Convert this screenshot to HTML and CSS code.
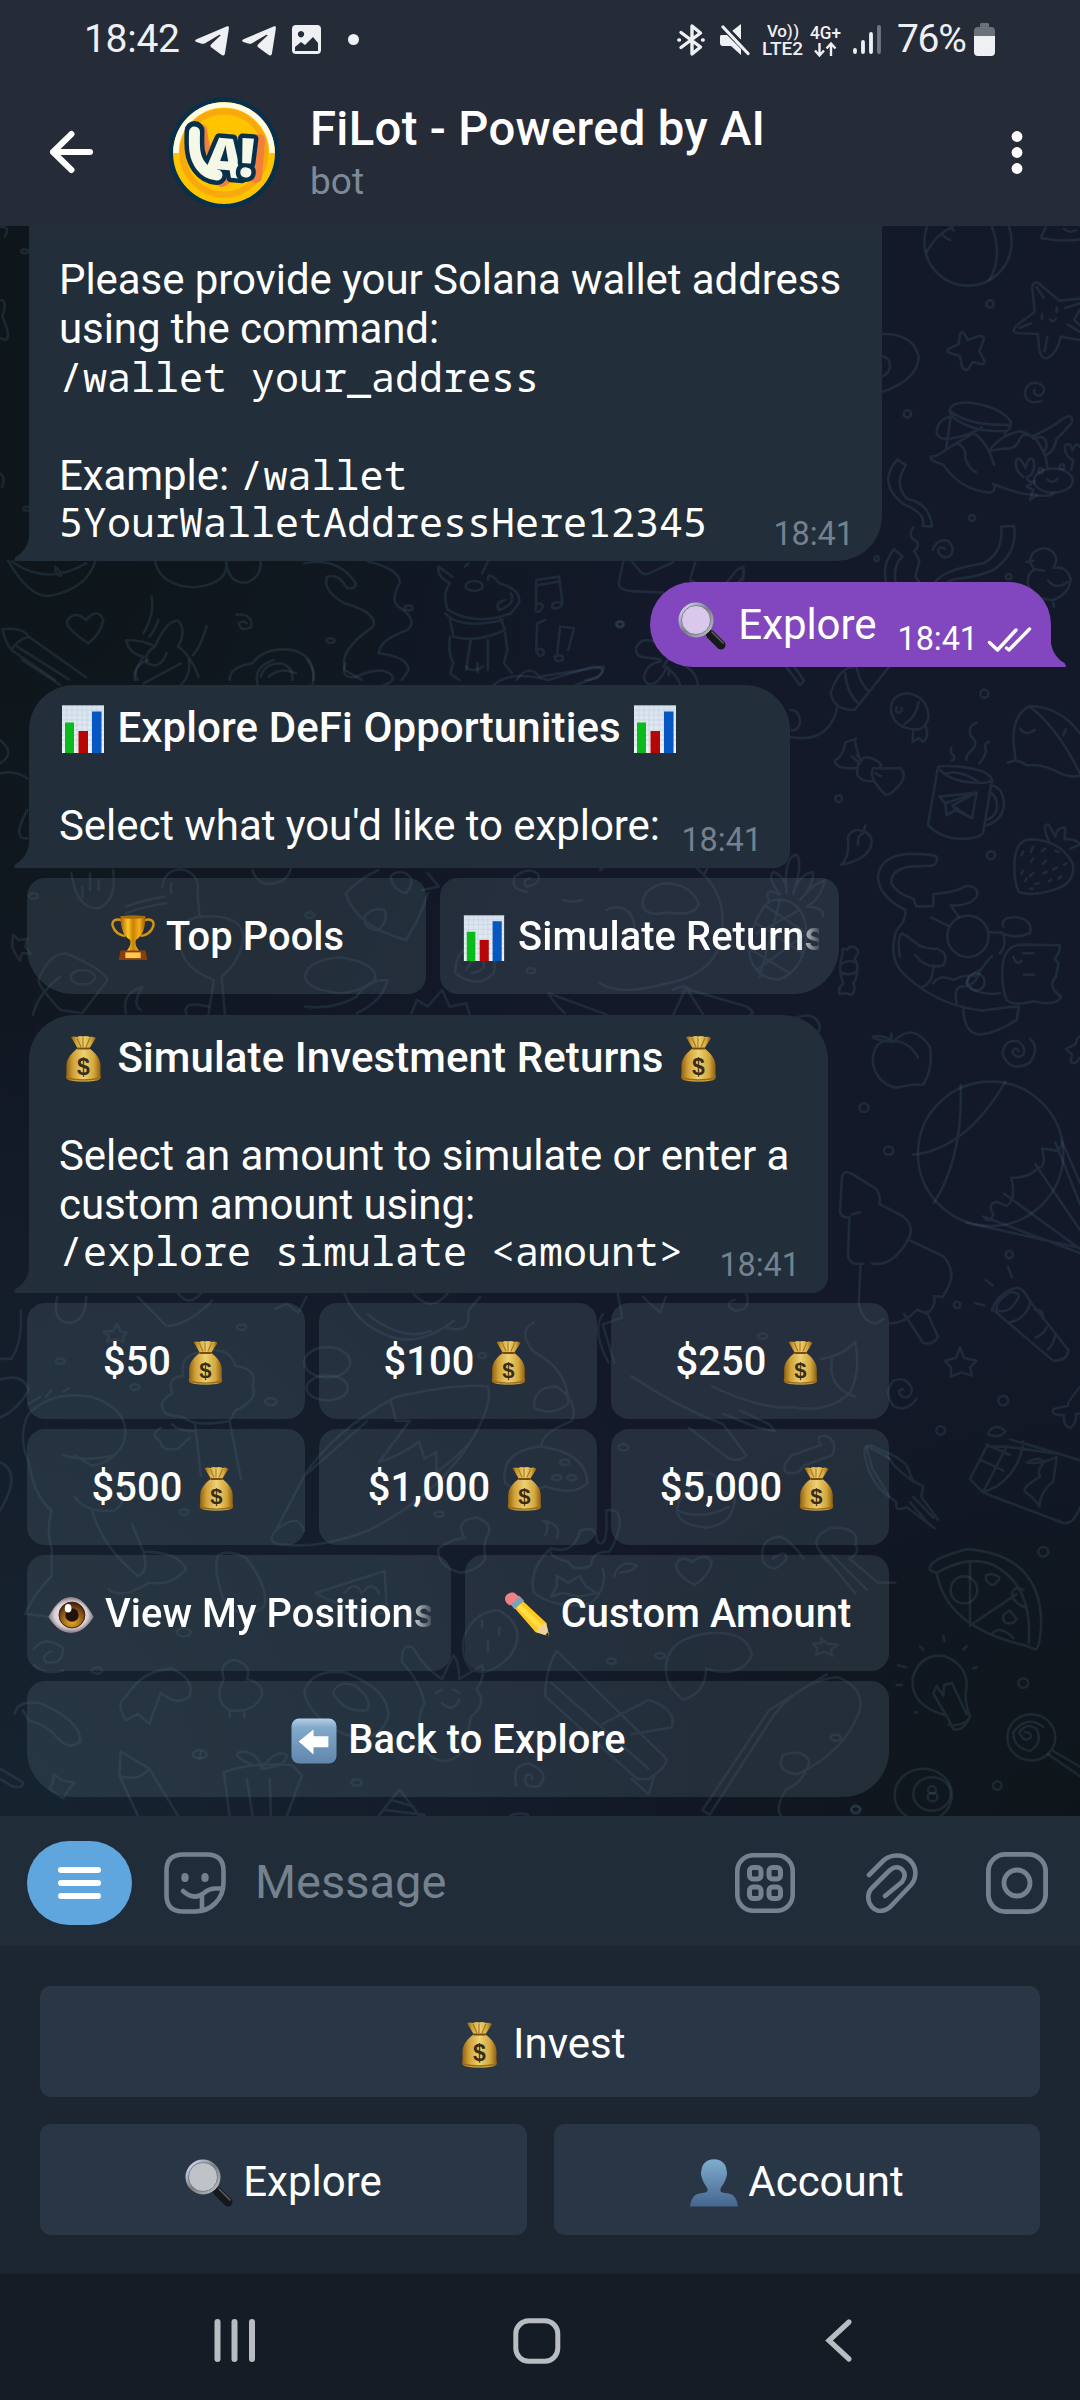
FILE: index.html
```
<!DOCTYPE html>
<html lang="en">
<head>
<meta charset="utf-8">
<title>FiLot - Powered by AI</title>
<link rel="stylesheet" href="styles.css">
</head>
<body>
<svg class="sprites" width="0" height="0" aria-hidden="true">
  <defs>
    <linearGradient id="paper" x1="0" y1="0" x2="0" y2="1"><stop offset="0" stop-color="#d6e2ee"/><stop offset="1" stop-color="#eef2f6"/></linearGradient>
    <linearGradient id="gold" x1="0" x2="1" y1="0" y2="0"><stop offset="0" stop-color="#8f5f10"/><stop offset=".2" stop-color="#d0a138"/><stop offset=".5" stop-color="#edd273"/><stop offset=".8" stop-color="#d3a73c"/><stop offset="1" stop-color="#8a5a10"/></linearGradient>
    <linearGradient id="cup" x1="0" x2="1" y1="0" y2="0"><stop offset="0" stop-color="#a86400"/><stop offset=".3" stop-color="#ffc62a"/><stop offset=".5" stop-color="#c98300"/><stop offset=".75" stop-color="#f4b21c"/><stop offset="1" stop-color="#9a5b00"/></linearGradient>
    <linearGradient id="rim" x1="0" y1="0" x2="1" y2="1"><stop offset="0" stop-color="#dfeaff"/><stop offset=".5" stop-color="#777c84"/><stop offset="1" stop-color="#c5c8cc"/></linearGradient>
    <linearGradient id="tile" x1="0" y1="0" x2="0" y2="1"><stop offset="0" stop-color="#b5d2ea"/><stop offset=".2" stop-color="#83a9cb"/><stop offset="1" stop-color="#5f86ad"/></linearGradient>
    <linearGradient id="bust" x1="0" y1="0" x2="0" y2="1"><stop offset="0" stop-color="#7fadcf"/><stop offset="1" stop-color="#44658f"/></linearGradient>
    <radialGradient id="eyeball"><stop offset="0" stop-color="#fff"/><stop offset=".75" stop-color="#d9d0d6"/><stop offset="1" stop-color="#8d8088"/></radialGradient>
    <radialGradient id="iris" cx=".5" cy=".75" r=".7"><stop offset="0" stop-color="#e8b020"/><stop offset=".5" stop-color="#a06a18"/><stop offset="1" stop-color="#4a2410"/></radialGradient>
  </defs>
  <symbol id="chart" viewBox="0 0 48 48">
    <rect x="3" y="0" width="42" height="48" fill="url(#paper)"/>
    <path d="M3 5H45M3 10H45M3 15H45M3 20H45M3 25H45M3 30H45M3 35H45M3 40H45M8 0V48M13 0V48M18 0V48M23 0V48M28 0V48M33 0V48M38 0V48" stroke="#c6d3df" stroke-width=".7"/>
    <path d="M3 .5H45" stroke="#9ca4b0"/>
    <rect x="6" y="17.500" width="9" height="30.500" fill="#0abb1c"/>
    <rect x="19.500" y="26" width="9.500" height="22" fill="#b70606"/>
    <rect x="33" y="6.500" width="9.500" height="41.500" fill="#0657c2"/>
  </symbol>
  <symbol id="bag" viewBox="0 0 48 48">
    <path d="M12 2Q15 1 18 2Q21 .5 24 1.500Q28 .5 31 2Q34 1 37 3L30 14H19Z" fill="url(#gold)"/>
    <path d="M18 3L22 12M24 2.500V12M31 3L27 12" stroke="#a87820" stroke-width="1.200"/>
    <path d="M19 13H30C35 17 41 22 41.500 30C41.800 34 41 38 42 42C42 45 38 46.500 24.500 46.500S7 45 7 42C8 38 7.200 34 7.500 30C8 22 14 17 19 13Z" fill="url(#gold)"/>
    <path d="M19 13.500H30" stroke="#7a4c0c" stroke-width="2.200" stroke-linecap="round"/>
    <path d="M8 43Q24 47 41 43" stroke="#9a6a18" stroke-width="1.500" fill="none"/>
    <text x="24.500" y="40" class="bag-sign">$</text>
  </symbol>
  <symbol id="trophy" viewBox="0 0 48 48">
    <path d="M13 6C6 3 1 6 3 12C5 18 10 21 16 22M35 6C42 3 47 6 45 12C43 18 38 21 32 22" fill="none" stroke="#d39416" stroke-width="2.500"/>
    <path d="M11 1H37C37 14 34 22 27 26C26 30 27 33 31 38H17C21 33 22 30 21 26C14 22 11 14 11 1Z" fill="url(#cup)"/>
    <ellipse cx="24" cy="2" rx="13" ry="1.800" fill="#a96b08"/>
    <path d="M11 37H37L39 47H9Z" fill="#8a3d0c"/>
    <rect x="16" y="39" width="16" height="6" fill="#ffc94d"/>
  </symbol>
  <symbol id="lens" viewBox="0 0 48 48">
    <path d="M27 28L33 34" stroke="#aaa" stroke-width="4"/>
    <path d="M32.500 32.500L43 43" stroke="#17181a" stroke-width="9" stroke-linecap="round"/>
    <path d="M34 30L45 41" stroke="#5b5d61" stroke-width="1.600" stroke-linecap="round"/>
    <circle cx="18" cy="18" r="16" fill="#fff" fill-opacity=".7" stroke="url(#rim)" stroke-width="3"/>
    <circle cx="18" cy="18" r="14.500" fill="none" stroke="#6d7076" stroke-width=".8"/>
  </symbol>
  <symbol id="eye" viewBox="0 0 48 48">
    <path d="M1 26C8 12 15 6 24 6S40 12 47 26C41 36 34 42 24 42S7 36 1 26Z" fill="url(#eyeball)" stroke="#a08e96"/>
    <circle cx="25" cy="24" r="13.500" fill="url(#iris)" stroke="#3d2010"/>
    <circle cx="25" cy="24" r="7" fill="#22110c"/>
    <ellipse cx="21" cy="17" rx="3.500" ry="4.500" fill="#fff"/>
  </symbol>
  <symbol id="pencil" viewBox="0 0 48 48">
    <path d="M7 12L16 6L44 32L47 46L33 42Z" fill="#ffc81c"/>
    <path d="M13 8.500L41 35.500L37 39L9 12Z" fill="#ffdd45"/>
    <path d="M40.500 34L33 41.500L47 46.500L44 32Z" fill="#eed09a"/>
    <path d="M43 45L47 46.500L45.800 42Z" fill="#222"/>
    <path d="M6 12L16 4L21 9L11 18Z" fill="#7da0bd"/>
    <path d="M1 7C1 3 7-1 11 1L16 5L6 14C3 12 1 10 1 7Z" fill="#f08285"/>
  </symbol>
  <symbol id="back" viewBox="0 0 48 48">
    <rect x=".5" y=".5" width="47" height="47" rx="8" fill="url(#tile)"/>
    <path d="M8 24.500L23.500 12V19H39V30.500H23.500V38Z" fill="#fff"/>
  </symbol>
  <symbol id="person" viewBox="0 0 48 48">
    <path d="M24 0C31 0 36.500 5 36.500 11C37.500 13 37 17 36 19C35 24 31.500 27 30.500 30C30 34 32 34 37 34.500C44 35 47 40 48 48H0C1 40 4 35 11 34.500C16 34 18 34 17.500 30C16.500 27 13 24 12 19C11 17 10.500 13 11.500 11C11.500 5 17 0 24 0Z" transform="translate(0 .3) scale(1 .985)" fill="url(#bust)"/>
  </symbol>
  <symbol id="plane" viewBox="0 0 34 30"><path d="M33.500 .5C34 .8 34 2 33.500 5L30 27C29.500 30 28 30 26 28.500L16.500 21.500C15 20.500 15 19.500 16.500 18L25.500 9.500C26 9 25 8.500 24 9L10.500 17C9 18 7.500 18 6 17.500L1.500 16C-.3 15.400 -.3 14 1.500 13.200L31 .8C32 .3 33 .2 33.500 .5Z"/></symbol>
  <symbol id="tail" viewBox="0 0 16 34"><path d="M16 0C16 15 11 25 1.500 30Q-1 34 1 34H16Z"/></symbol>
</svg>

<header class="top">
  <div class="status">
    <span class="clock">18:42</span>
    <svg class="st-plane" width="34" height="30"><use href="#plane"/></svg>
    <svg class="st-plane2" width="34" height="30"><use href="#plane"/></svg>
    <svg class="st-pic" width="30" height="30" viewBox="0 0 30 30"><path fill-rule="evenodd" d="M4 0H25Q29 0 29 4V25Q29 29 25 29H4Q0 29 0 25V4Q0 0 4 0ZM9 6A3.200 3.200 0 1 0 9.010 6ZM3 26H26V18L21 12L13 20L9 17L3 22Z"/></svg>
    <i class="st-dot"></i>
    <svg class="st-bt" width="28" height="34" viewBox="0 0 28 34" fill="none" stroke="#eef0f4" stroke-width="3.400" stroke-linejoin="round" stroke-linecap="round"><path d="M4 9.500L23.500 24L15 31V3L23.500 10L4 24.500"/><path d="M1.800 17H2.500M25.500 17H26.200"/></svg>
    <svg class="st-mute" width="30" height="32" viewBox="0 0 30 32"><path d="M1 11H7L21 25V31L11 22H3Q0 22 0 19V13Q0 11 1 11ZM12 7L21 0V16Z"/><path d="M6 2L30 27" stroke="#262b38" stroke-width="2.500"/><path d="M3 3L28 29.500" stroke="#eef0f4" stroke-width="3.200" stroke-linecap="round"/></svg>
    <svg class="st-lte" width="42" height="34" viewBox="0 0 42 34"><text x="5" y="14" font-size="17" textLength="20">Vo</text><text x="25" y="13.500" font-size="16" textLength="12">))</text><text x="0" y="32" font-size="19" textLength="41" lengthAdjust="spacingAndGlyphs">LTE2</text></svg>
    <svg class="st-4g" width="32" height="34" viewBox="0 0 32 34"><text x="0" y="15.500" font-size="17.500" textLength="31" lengthAdjust="spacingAndGlyphs">4G+</text><path d="M9.500 20V32M5 27.500L9.500 32.500L14 27.500M21 33V21M16.500 25.500L21 20.500L25.500 25.500" fill="none" stroke="#eef0f4" stroke-width="2.400"/></svg>
    <svg class="st-bars" width="28" height="32" viewBox="0 0 28 32" stroke="#eef0f4" stroke-width="3.800" stroke-linecap="round"><path d="M2 27V29M10 19V29M18 11V29"/><path d="M26 4V29" stroke="#707682"/></svg>
    <span class="pct">76%</span>
    <svg class="st-bat" width="21" height="34" viewBox="0 0 21 34"><path d="M6 1Q6 0 8 0H13Q15 0 15 1V4H18Q21 4.500 21 8V13H0V8Q0 4.500 3 4H6Z" fill="#6b707b"/><path d="M0 13H21V29Q21 33 17 33H4Q0 33 0 29Z"/></svg>
  </div>
  <div class="appbar">
    <svg class="arrow" width="44" height="44" viewBox="0 0 44 44" fill="none" stroke="#fff" stroke-width="6" stroke-linecap="round" stroke-linejoin="round"><path d="M41 22H4M22.500 4L4 22L22.500 40"/></svg>
    <svg class="avatar" width="112" height="112" viewBox="0 0 112 112">
      <circle cx="56" cy="56" r="55.500" fill="#06304c"/>
      <circle cx="56" cy="56" r="51" fill="#ffc400"/>
      <circle cx="56" cy="56" r="41.500" fill="#ffc400" stroke="#f9a80d" stroke-width="6"/>
      <path d="M8 56A48 48 0 0 1 104 56" fill="none" stroke="#fffbe9" stroke-width="5.500"/>
      <path d="M33 33L36 52M50 46L45 56M91 43L88 80M54 84L60 80" stroke="#f0803c" stroke-width="12" fill="none" stroke-linecap="round"/>
      <path d="M26.500 34C26 50 26 60 33 69Q39 77 49 78" stroke="#06304c" stroke-width="20" fill="none" stroke-linecap="round"/>
      <g class="logo-text"><text x="37" y="80" font-size="54" transform="rotate(5 56 60)">A</text><text x="71" y="80" font-size="54" transform="rotate(4 80 60)">!</text></g>
      <path d="M26.500 35C26 50 26 60 33 69Q39 77 49 78" stroke="#f5f8e6" stroke-width="11" fill="none" stroke-linecap="round"/>
    </svg>
    <div class="who"><h1>FiLot - Powered by AI</h1><p>bot</p></div>
    <svg class="dots" width="12" height="46" viewBox="0 0 12 46" fill="#fff"><circle cx="6" cy="6.500" r="5.400"/><circle cx="6" cy="22.500" r="5.400"/><circle cx="6" cy="38.500" r="5.400"/></svg>
  </div>
</header>

<main class="chat">
  <svg class="doodles" viewBox="0 226 1080 1590" width="1080" height="1590" aria-hidden="true">
    <g transform="translate(860 220) scale(.3333)">
      <circle cx="324" cy="66" r="131"/><path d="M200 96Q230 40 280 20M395 18Q430 110 388 180M250 46Q258 56 270 60M270 22L282 32"/>
      <path d="M558 20L544 50Q540 56 560 56Q600 66 660 58M612 26Q630 42 648 30"/>
      <path d="M524 276L517 206Q516 182 536 190L598 242L660 236M524 276L470 316Q450 338 476 340L534 342M534 342L537 386Q545 420 562 414Q592 400 602 350L660 360M530 202L552 234M514 310L478 324M562 350L554 394M616 264L660 250M624 314L660 336M660 270L642 300L660 316M570 298Q580 310 588 296M546 283V296M590 263V276"/>
      <path d="M300 342Q308 330 316 346L324 360L356 348Q376 346 370 362L358 394L372 420Q378 434 362 432L338 426L326 446Q314 456 306 440L300 408L268 398Q256 392 268 386L296 372Z"/>
      <path d="M66 342Q160 340 176 410Q174 480 66 516M66 408Q92 414 90 440Q86 462 66 470"/>
      <path d="M544 544Q500 556 495 520Q498 488 528 488Q556 494 552 514Q540 536 524 520Q520 514 524 510"/>
      <path d="M268 572Q276 544 330 548Q420 560 452 604Q456 620 440 634Q400 634 364 630Q276 606 268 572Q330 620 450 614M270 590Q230 600 230 640Q240 664 280 654Q330 646 366 622M272 592L258 688M436 636V648M256 690L340 640Q380 660 402 734M290 670Q320 680 316 716Q330 750 348 756M388 690Q430 640 480 634Q510 640 520 656M388 694Q420 684 446 686Q470 684 480 656Q490 640 502 644L522 650Q560 700 562 740M256 690Q230 712 212 710Q208 722 250 734Q300 810 390 818Q410 814 400 792Q480 824 520 824Q560 832 580 822M514 650Q560 630 590 610Q640 570 636 606Q610 640 590 656Q580 700 556 706M520 656Q560 640 560 680L550 700"/>
      <path d="M112 718L138 736Q100 790 140 836Q210 850 216 920L188 918Q200 880 130 852Q50 790 112 718ZM160 922Q140 950 172 966Q178 980 162 994Q174 1010 178 1024L166 1070L180 1090M218 990Q230 956 262 962Q286 980 274 1004Q250 1024 234 994Q236 976 254 986M102 988L128 1010Q100 1030 106 1086M102 988Q66 1030 78 1086M424 920L462 918Q474 1000 400 1050Q350 1070 310 1074Q280 1076 264 1086M424 920Q430 1000 370 1030Q250 1050 226 1086"/>
      <ellipse cx="580" cy="782" rx="58" ry="36"/><path d="M490 770Q460 750 470 718Q480 706 496 744Q506 704 520 720Q530 760 500 772Q506 790 524 784M636 720Q610 700 616 676Q630 664 638 692Q646 664 660 680M640 720L634 750M524 786L500 800L520 810L510 840L530 826M562 778Q578 794 592 776"/>
      <path d="M520 1044Q500 1020 522 996Q556 972 582 1000Q596 1020 580 1044Q620 1036 632 1076Q630 1120 580 1140Q520 1140 504 1094Q500 1060 524 1048L552 1052M498 1026L520 1022M564 1082Q590 1112 622 1086M578 1140L582 1160"/>
      <circle cx="390" cy="252" r="11"/><circle cx="142" cy="582" r="11"/><circle cx="336" cy="894" r="9"/><circle cx="50" cy="1016" r="7"/><circle cx="446" cy="1070" r="8"/><circle cx="542" cy="752" r="7"/><circle cx="606" cy="740" r="7"/>
    </g>
    <g transform="translate(600 540) scale(.3333)">
      <path d="M70 64L56 130Q56 154 110 154L190 158M96 64L122 96Q136 108 152 98L220 66M286 66L270 120M270 120Q380 180 430 110Q440 70 410 90L370 140M430 80V120"/>
      <path d="M190 380Q240 290 260 310M190 330Q160 290 124 304Q94 330 120 350L180 358M184 364Q140 370 132 410Q136 440 164 430Q190 410 200 380M206 385V405M240 370Q290 390 294 440M210 390Q240 420 240 436M560 382L600 436L612 422L584 382M692 458Q720 380 760 382M692 458Q700 510 764 510L866 382M736 400Q740 460 776 490M770 384Q780 430 806 454M712 500Q690 610 572 592M572 510Q600 510 600 550Q590 575 576 570"/>
      <circle cx="60" cy="254" r="9"/><circle cx="1153" cy="461" r="12"/><circle cx="716" cy="776" r="10"/><circle cx="1173" cy="946" r="12"/>
      <path d="M872 506Q876 462 924 460Q982 470 986 530Q980 560 956 568Q880 570 872 506ZM956 486Q950 530 914 552M940 568L938 606L956 594L970 606Q990 590 976 556M890 502Q884 520 900 518Q910 508 904 504"/>
      <path d="M780 658Q760 600 768 596L736 608Q730 650 704 662Q708 690 770 684M780 658Q810 644 840 670Q850 690 820 684Q810 700 822 722Q790 730 772 704Q770 680 780 658M844 686L900 684Q920 700 904 728Q870 770 856 764Q840 750 822 722M756 650L780 670M770 646L786 662M826 700L842 708"/>
      <path d="M1014 682L984 856Q1030 900 1090 896Q1140 896 1150 876L1176 720Q1170 690 1080 680Q1020 676 1014 682ZM1020 690Q1060 730 1140 728Q1170 730 1174 718M1040 700Q1080 690 1130 722M1172 736Q1212 740 1212 800Q1200 850 1154 856M1168 756Q1196 770 1190 810Q1180 836 1158 840M1018 770L1130 758L1116 834L1066 810L1040 826L1036 790ZM1036 790L1130 758L1058 796L1066 810M1058 796L1100 826M1054 624Q1050 640 1062 648Q1066 660 1054 662M1130 548Q1100 560 1114 590Q1140 610 1110 636Q1096 650 1100 660M1166 606Q1150 610 1158 632Q1156 650 1138 670"/>
      <path d="M1440 580Q1380 500 1290 498Q1240 520 1240 600L1246 656M1224 668Q1250 654 1280 676Q1330 670 1380 700Q1420 716 1440 706M1290 500Q1370 560 1440 700M1260 566Q1280 590 1304 570M1390 586L1398 568"/>
      <path d="M744 890Q760 864 784 872Q820 880 814 916Q800 960 724 974Q750 950 744 890ZM796 856L790 880Q772 884 774 914"/>
      <path d="M1244 960Q1250 900 1290 898Q1380 900 1418 970Q1430 1030 1360 1050Q1290 1070 1256 1056Q1240 1020 1244 960ZM1346 902Q1324 850 1346 854L1366 890Q1370 860 1396 864L1394 898Q1430 896 1440 914L1410 926"/><path d="M1270 934L1264 946M1300 920L1292 936M1336 926L1326 934M1300 956L1292 966M1338 962L1328 972M1366 932L1376 936M1360 988L1372 982M1392 974L1400 970M1270 992L1264 1002M1300 1000L1290 1008M1330 1000L1340 996M1276 1024L1280 1016M1316 1030L1306 1032M1346 1024L1354 1020M1376 1016L1384 1010M1290 1046H1298"/>
      <path d="M1010 950Q990 940 920 942Q840 950 834 1010Q836 1070 916 1110M916 1110Q920 1140 890 1170Q860 1260 920 1310Q1020 1400 1150 1412Q1230 1400 1256 1400M1010 950Q1016 980 980 978L930 980Q870 990 874 1030Q890 1060 940 1076L950 1100L1000 1098V1062Q1060 1060 1100 1038Q1140 1040 1130 1070Q1110 1100 1052 1096L1076 1130M900 1250Q890 1190 906 1180Q940 1200 960 1220M946 1246Q980 1290 1030 1276Q1050 1240 1010 1226Q960 1230 920 1186M994 1132L1044 1158M966 1342Q1000 1330 1000 1276M1000 1330Q1020 1300 1060 1320Q1100 1300 1130 1310Q1160 1260 1176 1250M1070 1390Q1060 1350 1080 1340Q1130 1340 1140 1290Q1100 1310 1100 1330Q1130 1370 1200 1360M1200 1176Q1240 1200 1290 1180Q1300 1140 1250 1132Q1200 1130 1210 1160M1210 1260Q1220 1220 1260 1214L1380 1216Q1380 1240 1364 1256L1376 1270L1368 1310Q1340 1340 1384 1370Q1370 1400 1300 1384Q1240 1400 1220 1380Q1200 1330 1210 1260M1240 1250Q1250 1280 1264 1262M1270 1240H1300M1272 1304H1302M1090 1400Q1090 1480 1140 1484Q1190 1480 1250 1440L1256 1404M1170 1176L1210 1180Q1220 1220 1200 1240"/><circle cx="1104" cy="1189" r="62"/><circle cx="1128" cy="1326" r="26"/>
      <path d="M728 1240Q724 1220 742 1230L750 1220Q776 1220 774 1240L764 1256Q780 1280 766 1320L760 1330Q770 1350 754 1366L740 1360L718 1362Q714 1340 730 1330Q712 1290 728 1240ZM726 1270Q750 1256 770 1270M722 1296Q744 1310 768 1296"/>
      <path d="M0 990Q40 960 140 960M290 984Q380 1060 366 1170Q360 1300 200 1330Q60 1370 0 1330M130 1100Q120 1050 190 1030Q270 1030 296 1090Q290 1130 200 1118Q140 1130 130 1100ZM20 1110Q60 1090 90 1120Q120 1170 80 1200M322 984L312 1006M506 1080Q490 1040 540 1064Q500 1010 520 996Q560 1010 560 1060Q550 950 590 944Q610 970 580 1060Q600 1000 640 996Q640 1040 600 1080Q640 1030 676 1020Q660 1080 620 1100Q670 1100 670 1130M500 1090Q440 1170 450 1250Q470 1320 540 1318Q610 1290 620 1190Q620 1110 570 1086Q530 1070 500 1090M470 1150L610 1240M500 1100L620 1180M455 1230L570 1300M600 1110L470 1180M620 1180L470 1290M540 1080L480 1310"/>
      <path d="M220 1350Q250 1330 270 1350L440 1400Q470 1420 450 1424M256 1346L220 1424M260 1346L310 1424"/>
    </g>
    <g transform="translate(780 1000) scale(.3333 .523)">
      <path d="M340 80Q280 70 278 120Q290 160 350 168Q400 160 430 162Q460 130 450 90Q400 40 340 80Q280 76 278 70Q310 66 334 78M334 64V78M340 78Q390 80 414 110"/>
      <path d="M750 74Q780 90 750 120Q690 140 668 104Q670 76 712 78Q740 90 730 104Q710 116 696 98Q710 88 716 98M900 70Q890 70 888 84L858 94L876 104L872 118Q886 126 900 110"/>
      <ellipse cx="632" cy="294" rx="218" ry="138"/><path d="M542 162Q550 300 462 388M676 156Q560 284 400 296M610 414Q630 430 640 410Q620 390 650 386L680 394Q710 380 694 340Q750 340 776 320Q800 320 786 284L830 288Q850 280 846 270M560 426L900 474M610 414L900 484M672 370L900 476M766 314L900 440M826 272L900 390M846 270L900 350"/>
      <path d="M204 416Q180 416 180 402L186 340Q190 322 220 334L290 362Q304 380 298 390L370 414Q400 430 390 450L384 458L490 490Q530 520 504 550L488 568L462 566Q470 586 440 600L412 592Q370 620 330 618M208 416L204 490Q210 508 250 504M242 506L236 580Q250 620 290 618L310 610M216 410L240 406M276 504Q340 510 384 458M372 600L430 656Q460 660 474 644L440 596"/>
      <path d="M636 590L690 620L820 690Q860 690 866 670L750 576Q730 550 710 550Q650 560 636 594M652 594Q640 580 690 558Q730 560 710 574Q690 600 652 594M690 616Q740 610 752 576M764 592Q790 590 790 610M766 646Q790 640 800 626M804 668Q820 660 826 640M586 580L614 584M618 536L638 546M684 510L696 530"/>
      <path d="M540 664L552 684L590 690L570 702L576 718L544 712L512 720L514 704L496 690L528 684ZM410 762Q380 790 340 776Q310 750 340 728Q380 718 396 744Q390 768 362 756Q350 746 368 744M900 740Q860 770 864 776L820 782Q810 794 852 794Q850 816 872 818Q890 810 888 792L900 790"/>
      <path d="M570 916L620 854H680L840 868L900 880M570 916L610 942L850 1000Q880 1004 900 970M690 840L840 868M680 854L610 940M730 844Q720 900 650 930L616 940M620 850L690 870M598 878L670 900M740 884Q790 870 790 886Q770 900 780 912Q730 930 734 940Q760 950 778 968Q780 940 820 920L830 874Q770 890 740 884M624 830Q640 806 676 824Q660 840 624 830Z"/>
      <path d="M450 1090Q440 1070 560 1050Q780 1060 784 1190Q780 1240 766 1242L736 1234Q500 1200 470 1096ZM470 1096Q560 1060 640 1080Q760 1120 746 1230M570 1074V1196L710 1136M636 1212Q660 1194 700 1220M738 1162Q690 1150 698 1130Q710 1120 730 1128M620 1110Q610 1096 640 1098Q670 1104 650 1112Q640 1126 620 1110ZM674 1190Q660 1174 690 1168Q700 1174 710 1184Q700 1196 674 1190Z"/><ellipse cx="552" cy="1128" rx="40" ry="26"/>
      <path d="M500 1368Q390 1350 398 1296Q420 1250 490 1254Q560 1270 560 1310Q550 1340 570 1370Q550 1400 520 1394ZM460 1326L500 1370M460 1326L470 1312L490 1330L492 1310L516 1306L560 1366M506 1386Q550 1390 570 1372M490 1216L494 1226M420 1236L430 1242M354 1272L378 1276M350 1310H366M404 1362H410M550 1242L560 1236M580 1278L590 1276"/>
      <ellipse cx="754" cy="1410" rx="72" ry="44"/><path d="M734 1400Q760 1400 750 1412Q730 1420 718 1400Q740 1380 770 1394Q790 1420 750 1436Q700 1430 700 1400Q740 1366 790 1390M820 1436L900 1466M804 1442L900 1484"/>
      <ellipse cx="430" cy="1520" rx="86" ry="50"/><ellipse cx="456" cy="1518" rx="56" ry="32"/><ellipse cx="456" cy="1510" rx="12" ry="7"/><ellipse cx="458" cy="1524" rx="15" ry="8"/>
      <path d="M254 870Q250 840 300 860Q350 870 380 890L400 920L430 930L424 950L474 994M254 870Q270 930 350 960Q340 980 380 970L464 1010M390 960L450 1004M400 950L460 990M320 866Q330 890 400 920"/>
      <ellipse cx="252" cy="206" rx="14" ry="8"/><ellipse cx="326" cy="288" rx="14" ry="8"/><ellipse cx="688" cy="487" rx="11" ry="7"/><ellipse cx="531" cy="583" rx="10" ry="6"/><ellipse cx="670" cy="766" rx="15" ry="9"/><ellipse cx="482" cy="823" rx="13" ry="8"/><ellipse cx="790" cy="1055" rx="15" ry="9"/><ellipse cx="730" cy="1306" rx="15" ry="9"/><ellipse cx="652" cy="1502" rx="13" ry="8"/><ellipse cx="227" cy="1548" rx="13" ry="8"/>
      <path d="M40 36Q100 20 118 46Q122 60 108 64"/>
    </g>
    <g transform="translate(0 220) scale(.574 .3333)">
      <path d="M14 1022Q50 1130 84 1128Q150 1110 166 1024M20 1024Q80 1100 150 1030M270 1024Q280 1100 340 1102Q400 1090 394 1024M396 1040Q400 1090 430 1088Q456 1070 454 1024M96 1040Q110 1060 106 1068Q96 1064 96 1040"/>
      <path d="M530 1030Q590 1010 620 1090Q620 1110 604 1104Q590 1060 570 1070Q560 1110 600 1150Q660 1180 650 1220Q590 1290 600 1350L630 1380M640 1024Q700 1050 696 1090Q680 1140 694 1160Q730 1200 710 1230Q660 1260 660 1300Q710 1310 712 1350L700 1380"/>
      <path d="M788 1070L764 1040Q760 1070 784 1090Q770 1120 780 1170Q830 1220 890 1180L904 1150Q910 1110 870 1090Q850 1050 850 1080M840 1060L850 1024M810 1040L816 1030M890 1120Q900 1150 870 1170Q860 1150 880 1140M776 1180Q800 1230 876 1200M784 1200L790 1250Q830 1270 880 1230L872 1196M784 1250Q780 1300 790 1330L784 1360L800 1380M880 1240L884 1290L878 1330L892 1360M820 1260L812 1350M850 1260V1350M832 1330V1356"/><circle cx="826" cy="1098" r="15"/>
      <path d="M934 1160L934 1080L974 1070L980 1150M936 1096L976 1084M934 1160Q930 1180 940 1174Q954 1150 934 1150M980 1150Q960 1140 962 1164Q974 1170 980 1150M934 1290L936 1210L950 1200M970 1310L976 1220L1000 1224L990 1290M934 1290Q946 1280 948 1300Q940 1320 934 1290M966 1310Q984 1300 980 1320Q966 1330 966 1310"/>
      <path d="M154 1270Q110 1220 118 1200Q130 1170 150 1200Q170 1160 180 1200Q176 1240 154 1270ZM264 1130Q270 1180 250 1240M276 1200Q270 1230 260 1250M360 1218Q350 1280 336 1306M220 1260Q250 1260 270 1280Q290 1200 310 1202Q326 1230 310 1280Q330 1300 346 1370M220 1260Q224 1300 250 1310Q230 1360 240 1380M270 1280Q250 1300 256 1330Q280 1350 290 1300M412 1184Q440 1180 438 1220Q420 1240 416 1210Q424 1200 430 1210"/>
      <path d="M4 1228Q40 1220 50 1250L150 1372M4 1228Q10 1270 20 1290L96 1380M20 1290Q30 1260 50 1250M30 1280L120 1378M400 1380Q400 1340 440 1330Q460 1280 510 1290Q550 1310 546 1380M454 1370Q460 1330 490 1330Q510 1340 510 1380"/>
      <path d="M900 1380Q920 1330 940 1370L1052 1340Q1050 1380 1020 1380M0 20Q20 20 8 50M0 240Q14 240 4 290Q20 350 10 360L0 355M0 760Q10 770 4 800"/>
      <circle cx="712" cy="1164" r="7"/><circle cx="576" cy="1262" r="7"/><circle cx="1080" cy="1212" r="7"/><circle cx="43" cy="94" r="6"/><circle cx="47" cy="866" r="6"/>
    </g>
    <g transform="translate(0 660) scale(.5485 .3333)">
      <path d="M40 0L110 75M246 60Q240 20 270 0M262 70L330 10M330 75Q350 40 344 0M470 75Q460 20 500 0M570 75Q576 30 560 0M490 50Q510 20 540 40M630 10Q620 60 650 50Q690 20 710 40Q726 60 700 75M850 20Q860 40 880 20M900 75Q930 30 1000 60L1080 20Q1110 20 1090 50L1050 75"/>
      <path d="M0 240Q30 280 0 310M0 340Q30 330 50 356M50 450Q20 540 50 535M130 640Q140 750 180 745Q214 720 206 630M150 680V710M164 640V690M180 660V690"/>
      <path d="M296 680Q300 630 330 628Q366 640 360 700L364 770Q440 760 444 830Q440 900 404 950L410 1064M364 770Q320 780 330 870Q340 930 390 960L380 1064M312 670V700M230 740Q260 720 300 710M230 760Q260 740 304 730M460 630Q470 680 500 670Q526 660 530 626M630 700Q660 650 690 630M630 700Q650 800 740 840Q770 760 780 700M712 650Q716 690 740 700Q760 660 740 640Q720 630 712 650M664 770Q664 810 690 810Q710 780 700 750Q680 740 664 770M780 640L800 680L770 690"/>
      <path d="M70 960Q90 880 120 880Q190 930 196 960L150 1060L110 1050Q70 980 70 960M556 950Q560 900 620 892Q690 910 684 960Q650 1000 620 1000Q560 990 556 950ZM556 1040Q610 1050 650 1010Q670 960 706 960Q700 1020 650 1060M750 1060L760 1020L780 1040L806 990L820 1040L850 1030L856 1062M230 1060Q220 1000 260 980Q240 1030 256 1050M340 1064Q330 1020 380 1040M60 1064Q70 1000 110 950"/><circle cx="151" cy="952" r="22"/><circle cx="61" cy="708" r="8"/><circle cx="565" cy="766" r="8"/><circle cx="968" cy="932" r="8"/>
      <path d="M24 824L34 840L50 836L46 860L56 880L40 880L36 902L28 880L22 860Z"/>
      <path d="M940 650Q960 620 980 640Q990 670 960 680Q950 660 966 655M960 695Q930 690 938 650M1026 720Q1050 730 1060 720M830 940Q830 860 870 860Q910 880 900 940Q870 990 830 940M850 930Q860 890 880 900Q890 930 860 940M1000 1000Q1050 1030 1106 1064M1000 1000Q1010 1030 1030 1060"/>
    </g>
    <g transform="translate(0 1290) scale(.574 .3444)">
      <path d="M100 20Q90 90 120 96Q150 90 150 20M240 20L290 105Q330 100 370 30M310 10Q330 50 350 10M480 54L500 40L520 66L534 20M600 10Q620 90 660 120Q720 180 790 90M720 10Q750 70 780 10M780 110Q820 130 816 60L836 20M640 70Q700 150 750 120M1076 10L1084 80L1050 100L1070 210M1120 20L1150 66L1160 20M1060 210Q1030 120 1050 70M1300 10Q1310 60 1280 60Q1260 40 1280 28"/>
      <path d="M204 100L210 120L222 124L214 136L216 150L202 142L186 150L190 134L180 120L196 120ZM290 360Q270 330 300 300Q290 250 320 250Q310 190 350 180Q400 160 410 220Q450 230 440 280Q450 320 410 350L400 380Q340 400 320 370ZM340 390L350 540M400 380L420 550M280 400Q260 420 280 440Q280 470 310 460L330 430M300 390Q310 410 340 410"/>
      <path d="M50 500Q30 420 50 360Q90 290 160 310Q230 350 216 440Q200 500 160 510L130 480M110 480Q150 500 200 480M50 500Q60 600 90 640Q80 700 90 750L90 830Q60 880 44 940L90 950M130 600Q150 650 200 640Q230 600 210 530M160 640Q180 750 240 830Q260 820 250 760L230 680M250 760Q310 760 324 810Q300 860 260 850Q210 900 190 870M0 500Q40 530 0 640M0 260Q40 240 50 290Q30 350 0 370M50 330L70 310M80 310L90 290M110 295L120 285M36 60Q40 150 20 200L0 200"/>
      <ellipse cx="570" cy="210" rx="40" ry="44"/><ellipse cx="570" cy="284" rx="36" ry="36"/>
      <path d="M530 540Q580 410 690 310Q800 270 850 280Q860 330 820 440Q760 600 640 700Q560 750 500 740Q460 740 480 700ZM680 320L690 380L714 380L660 500Q700 480 730 440L740 490L760 470V530Q800 480 820 440M530 540L640 380M480 700Q520 640 530 700M930 94Q900 120 930 180Q990 230 990 330Q960 370 930 340Q930 280 970 280Q1010 330 996 380Q940 420 944 452M880 560Q870 470 940 454Q1020 470 1024 560Q1000 600 950 570Q910 600 880 560M1100 250Q1180 340 1260 390L1300 480Q1290 500 1270 490L1200 400M1240 280Q1330 350 1380 340Q1440 360 1480 300Q1500 240 1490 150Q1470 190 1430 200M1290 350L1340 390L1350 410L1320 400L1260 360M1450 200Q1440 280 1490 310M1380 480L1430 450Q1420 420 1440 424Q1460 440 1450 480L1400 510Q1390 540 1370 530Q1360 510 1380 480M1510 460Q1500 440 1550 490M1510 460L1520 520L1550 600"/>
      <path d="M1180 640Q1180 600 1200 590Q1200 540 1230 530Q1260 540 1250 580L1280 600Q1280 680 1230 690Q1180 680 1180 640M1180 640Q1220 670 1270 630M800 820Q760 800 764 750Q790 720 810 720Q790 670 830 660Q860 680 850 710Q840 740 846 780Q830 820 800 820M950 710Q960 680 946 670Q980 680 970 720M960 750Q1000 770 1010 700Q1040 680 1040 730Q1060 760 1056 640Q1080 630 1080 680Q1070 750 1060 760Q1030 760 1030 800Q1000 820 990 790Q950 770 960 750M960 750Q920 810 930 880Q970 930 1030 910Q1060 860 1050 810M1070 830Q1080 780 1110 800Q1100 820 1080 820M970 830L990 850L1010 830L1020 860L1040 880L1010 890L980 880L960 890L970 860ZM1210 856Q1170 820 1180 790Q1190 770 1206 790Q1230 760 1240 790Q1236 830 1210 856M1346 780Q1370 750 1370 780Q1350 830 1330 790Q1320 720 1360 716Q1380 730 1400 780M1440 780Q1400 720 1450 690Q1500 690 1490 740Q1500 760 1480 780M1440 780L1490 880M1450 770L1510 870M1480 780L1530 850L1560 850M1430 770L1450 800"/>
      <path d="M390 900Q370 810 380 770Q400 750 430 780Q470 870 460 920Q430 960 400 920M550 880L670 816L674 940Q600 930 550 880ZM600 880Q620 840 630 880Q650 840 660 880M700 1080Q700 1020 720 1040Q740 1100 770 1130L790 1060Q800 1080 800 1130L840 1090Q846 1120 830 1160Q850 1200 820 1240L810 1330Q780 1400 740 1340Q720 1250 740 1200Q730 1130 700 1080M760 1170L770 1160M790 1160L800 1170M770 1200Q790 1230 800 1190M810 1000Q830 930 870 930Q920 980 890 1060Q850 1130 820 1100Q800 1060 810 1000M840 960V980M850 1020V1050M870 980V1000M60 1040Q80 1000 110 1040Q110 1090 80 1080Q70 1060 90 1050M60 1090Q80 1120 110 1105"/>
      <path d="M220 1180Q250 1100 300 1100Q340 1130 330 1180Q310 1210 280 1170L260 1260L240 1230L220 1250Q200 1200 220 1180M390 1130Q380 1080 410 1074Q440 1090 430 1130Q460 1140 456 1180Q440 1230 400 1220Q370 1190 390 1130M400 1220V1240M426 1220V1240M530 1170Q540 1100 600 1110Q680 1160 676 1240Q660 1320 600 1290Q540 1240 530 1170ZM580 1170Q590 1130 620 1150Q650 1190 640 1220Q600 1230 580 1170M26 1230Q30 1190 70 1200Q140 1250 140 1310Q120 1340 100 1300Q80 1260 50 1250L40 1220M350 1340L348 1360M210 1340L260 1390L310 1526M210 1340L208 1410L240 1526M208 1410Q240 1430 260 1390M390 1400Q440 1370 510 1380L526 1410L500 1526M390 1400L400 1526M440 1380Q400 1350 420 1340Q450 1340 456 1390Q480 1330 500 1350Q500 1380 460 1390M430 1420L440 1526M470 1420L472 1526M94 1406L108 1424L130 1430L120 1450L110 1476L96 1460L86 1450L92 1430ZM660 1526L696 1450L730 1526M680 1480L720 1500M670 1510L740 1524M890 1526Q900 1516 920 1524M900 1440Q890 1380 920 1374Q960 1400 940 1440Q910 1450 916 1410Q930 1400 926 1420M0 1390L40 1430Q40 1450 20 1440L0 1420"/>
      <path d="M970 1048L1160 1360Q1166 1380 1130 1420L1110 1420L950 1180Q950 1100 970 1048ZM960 1140L1130 1390M1050 1260L1130 1190Q1180 1220 1170 1270L1100 1290M1100 1420L1130 1464L1140 1410M1160 1100Q1160 1020 1220 1000Q1300 980 1310 1060Q1290 1130 1230 1100Q1230 1170 1190 1190Q1160 1150 1160 1100M1430 1010L1440 1026L1460 1030L1448 1044L1450 1062L1436 1050L1422 1060L1424 1040L1416 1028L1432 1024ZM1440 1116L1340 1220L1224 1510L1236 1524L1350 1230Q1400 1130 1460 1124Q1510 1160 1496 1230Q1470 1340 1390 1406Q1350 1400 1364 1350Q1400 1330 1410 1370Q1400 1430 1370 1450Q1350 1500 1360 1526"/>
      <circle cx="421" cy="108" r="8"/><circle cx="105" cy="207" r="8"/><circle cx="235" cy="282" r="8"/><circle cx="472" cy="324" r="10"/><circle cx="840" cy="190" r="7"/><circle cx="1328" cy="134" r="8"/><circle cx="1086" cy="457" r="9"/><circle cx="321" cy="645" r="8"/><circle cx="765" cy="651" r="8"/><circle cx="169" cy="1105" r="9"/><circle cx="320" cy="994" r="12"/><circle cx="1065" cy="1078" r="8"/><circle cx="1150" cy="1062" r="8"/><circle cx="348" cy="1348" r="12"/><circle cx="621" cy="1430" r="9"/><circle cx="1456" cy="1300" r="9"/><circle cx="1491" cy="1508" r="8"/><circle cx="984" cy="500" r="8"/><circle cx="970" cy="545" r="8"/><circle cx="996" cy="545" r="8"/>
    </g>
  </svg>

  <article class="bubble in b1">
    <svg class="tail" width="16" height="34"><use href="#tail"/></svg>
    <p>Please provide your Solana wallet address</p>
    <p>using the command:</p>
    <p><code>/wallet your_address</code></p>
    <p class="gap">Example: <code>/wallet</code></p>
    <div class="last mono"><p><code>5YourWalletAddressHere12345</code></p><time>18:41</time></div>
  </article>

  <article class="bubble out">
    <svg class="tail" width="16" height="34"><use href="#tail"/></svg>
    <p><svg class="emo"><use href="#lens"/></svg> Explore</p>
    <time>18:41</time>
    <svg class="checks" width="46" height="26" viewBox="0 0 46 26" fill="none" stroke="#fff" stroke-width="3.400" stroke-linecap="round" stroke-linejoin="round"><path d="M2.500 15.500L10.500 23L29 3M19.500 21L22 23L42.500 2"/></svg>
  </article>

  <article class="bubble in b2">
    <svg class="tail" width="16" height="34"><use href="#tail"/></svg>
    <p class="title"><svg class="emo"><use href="#chart"/></svg> Explore DeFi Opportunities <svg class="emo"><use href="#chart"/></svg></p>
    <div class="last gap"><p>Select what you'd like to explore:</p><time>18:41</time></div>
  </article>
  <div class="keys two short">
    <button class="bl"><span><svg class="emo"><use href="#trophy"/></svg> Top Pools</span></button>
    <button class="br cut"><span><svg class="emo"><use href="#chart"/></svg> Simulate Returns</span></button>
  </div>

  <article class="bubble in b3">
    <svg class="tail" width="16" height="34"><use href="#tail"/></svg>
    <p class="title"><svg class="emo"><use href="#bag"/></svg> Simulate Investment Returns <svg class="emo"><use href="#bag"/></svg></p>
    <p class="gap">Select an amount to simulate or enter a</p>
    <p>custom amount using:</p>
    <div class="last mono"><p><code>/explore simulate &lt;amount&gt;</code></p><time>18:41</time></div>
  </article>
  <div class="keys three">
    <button><span>$50 <svg class="emo"><use href="#bag"/></svg></span></button>
    <button><span>$100 <svg class="emo"><use href="#bag"/></svg></span></button>
    <button><span>$250 <svg class="emo"><use href="#bag"/></svg></span></button>
    <button><span>$500 <svg class="emo"><use href="#bag"/></svg></span></button>
    <button><span>$1,000 <svg class="emo"><use href="#bag"/></svg></span></button>
    <button><span>$5,000 <svg class="emo"><use href="#bag"/></svg></span></button>
  </div>
  <div class="keys two">
    <button class="cut"><span><svg class="emo"><use href="#eye"/></svg> View My Positions</span></button>
    <button><span><svg class="emo"><use href="#pencil"/></svg> Custom Amount</span></button>
  </div>
  <div class="keys one">
    <button class="bl br"><span><svg class="emo"><use href="#back"/></svg> Back to Explore</span></button>
  </div>
</main>

<section class="composer">
  <div class="menu"><i></i><i></i><i></i></div>
  <svg class="sticker" width="62" height="62" viewBox="0 0 62 62" fill="none" stroke="#74818f" stroke-width="4.600" stroke-linecap="round"><path d="M19 2.500H43Q59.500 2.500 59.500 19V31C59.500 47 47 59.500 31 59.500H19Q2.500 59.500 2.500 43V19Q2.500 2.500 19 2.500Z"/><path d="M19 39Q30 49 40 41Q45 36.500 52 36.500H58M38 43V57"/><ellipse cx="21" cy="25.500" rx="3.700" ry="4.500" fill="#74818f" stroke="none"/><ellipse cx="41" cy="25.500" rx="3.700" ry="4.500" fill="#74818f" stroke="none"/></svg>
  <span class="hint">Message</span>
  <svg class="apps" width="60" height="60" viewBox="0 0 60 60" fill="none" stroke="#74818f" stroke-width="4.600"><rect x="2.300" y="2.300" width="55.400" height="55.400" rx="16"/><g stroke-width="5"><rect x="14.500" y="14.500" width="11.500" height="11.500" rx="3.500"/><rect x="34" y="14.500" width="11.500" height="11.500" rx="3.500"/><rect x="14.500" y="34" width="11.500" height="11.500" rx="3.500"/><rect x="34" y="34" width="11.500" height="11.500" rx="3.500"/></g></svg>
  <svg class="clip" width="52" height="60" viewBox="0 0 52 60" fill="none" stroke="#74818f" stroke-width="4.600" stroke-linecap="round" stroke-linejoin="round"><path d="M3 22L17 8C24 1 37 .500 44 7.500S51 25 45 32L26 52C20 59 11 60 6 54S1 40 6 35L22 19C28 13 33 13 36.500 17S39 25 36 29L19 43"/></svg>
  <svg class="camera" width="62" height="62" viewBox="0 0 62 62" fill="none" stroke="#74818f" stroke-width="4.800"><rect x="2.400" y="2.400" width="57.200" height="57.200" rx="17"/><circle cx="31" cy="31" r="13"/></svg>
</section>

<section class="keyboard">
  <button class="wide"><span><svg class="emo"><use href="#bag"/></svg> Invest</span></button>
  <button><span><svg class="emo"><use href="#lens"/></svg> Explore</span></button>
  <button><span><svg class="emo"><use href="#person"/></svg> Account</span></button>
</section>

<nav class="sysnav">
  <svg class="recents" width="42" height="46" viewBox="0 0 42 46" stroke="#b9bcc0" stroke-width="6" stroke-linecap="round"><path d="M3.500 4V41M20.500 4V41M38 4V41"/></svg>
  <svg class="home" width="48" height="46" viewBox="0 0 48 46" fill="none" stroke="#b9bcc0" stroke-width="5"><rect x="2.800" y="2.800" width="42" height="40.500" rx="13"/></svg>
  <svg class="goback" width="28" height="46" viewBox="0 0 28 46" fill="none" stroke="#b9bcc0" stroke-width="5.200" stroke-linecap="round"><path d="M24 4L4 22.500L24 41"/></svg>
</nav>
</body>
</html>
```
FILE: styles.css
```
* { box-sizing: border-box; }
body {
  margin: 0; width: 1080px; height: 2400px; overflow: hidden;
  background: #151c25; color: #fff; font: 42px/49px Roboto, sans-serif;
}
.sprites { position: absolute; }
h1, p { margin: 0; font-weight: 400; }
svg { display: block; flex: none; }
button { border: 0; margin: 0; color: #fff; font-family: inherit; }
code { font-family: "Noto Sans Mono", "DejaVu Sans Mono", monospace; font-size: 40px; letter-spacing: 0; line-height: 0; }
.emo { display: inline-block; width: 48px; height: 48px; margin: -5px 0; vertical-align: -6px; }
.bag-sign { font: 700 23px "Liberation Sans", sans-serif; fill: #3a2c16; text-anchor: middle; }

/* header */
.top { height: 226px; background: #262b38; }
.status { display: flex; height: 78px; padding-left: 84px; align-items: flex-start; color: #eef0f4; fill: #eef0f4; font-size: 39px; line-height: 46px; }
.clock { width: 111px; margin-top: 16px; letter-spacing: -.3px; }
.st-plane { margin-top: 26px; }
.st-plane2 { margin: 26px 0 0 13px; }
.st-pic { margin: 25px 0 0 16px; }
.st-dot { width: 11px; height: 11px; margin: 34px 0 0 26px; border-radius: 50%; background: #eef0f4; }
.st-bt { margin: 23px 0 0 318px; }
.st-mute { margin: 24px 0 0 15px; }
.st-lte { margin: 23px 0 0 12px; font-weight: 500; }
.st-4g { margin: 23px 0 0 6px; font-weight: 500; }
.st-bars { margin: 23px 0 0 11px; }
.pct { width: 77px; margin: 16px 0 0 16px; letter-spacing: -1.300px; }
.st-bat { margin: 23px 0 0 0; }
.appbar { display: flex; height: 148px; padding-left: 49px; }
.arrow { margin-top: 52px; }
.avatar { margin: 19px 0 0 75px; }
.logo-text { font-family: "Open Sans", sans-serif; font-weight: 800; fill: #f5f8e6; stroke: #06304c; stroke-width: 9px; stroke-linejoin: round; paint-order: stroke; }
.who { margin: 24px 0 0 30px; width: 650px; }
.who h1 { font-size: 47.250px; line-height: 55px; font-weight: 500; letter-spacing: .32px; white-space: nowrap; }
.who p { margin-top: 3px; font-size: 37px; line-height: 44px; color: #7d8b99; }
.dots { margin: 52px 0 0 51px; }

/* conversation */
.chat {
  position: relative; height: 1590px; overflow: hidden; display: flex; flex-direction: column; align-items: flex-start;
  background:
    radial-gradient(700px 800px at 0 100%, #16242f 0, rgba(22,36,47,0) 100%),
    radial-gradient(600px 500px at 100% 100%, #0e151a 0, rgba(14,21,26,0) 100%),
    radial-gradient(650px 1000px at 0 12%, #0e161b 20%, rgba(14,22,27,0) 100%),
    #131928;
}
.doodles { position: absolute; inset: 0; fill: none; stroke: #5f8299; stroke-opacity: .17; stroke-width: 2.600px; stroke-linecap: round; stroke-linejoin: round; }
.doodles * { vector-effect: non-scaling-stroke; }
.bubble { position: relative; margin-left: 29px; padding: 18px 0 0 30px; background: #222e39; letter-spacing: -.07px; white-space: nowrap; }
.tail { position: absolute; left: -15px; bottom: 0; fill: #222e39; }
.title { font-weight: 500; letter-spacing: .1px; }
.gap { margin-top: 49px; }
.last { display: flex; justify-content: space-between; align-items: flex-start; padding-right: 28px; }
time { margin-top: 20px; font-size: 32.500px; line-height: 38px; color: #74818f; }
.last.mono p { line-height: 45px; }
.last.mono time { margin-top: 17px; }
.b1 { width: 853px; height: 335px; padding-top: 29px; border-radius: 0 0 45px 0; }
.b1 .last time { margin-top: 15px; }
.b2 { width: 761px; height: 183px; margin-top: 18px; border-radius: 45px 45px 16px 0; }
.b3 { width: 799px; height: 278px; margin-top: 21px; border-radius: 45px 45px 16px 0; }
.out { display: flex; width: 401px; height: 85px; margin: 21px 0 0 650px; padding-left: 28px; background: #8247be; border-radius: 42.500px 42.500px 0 42.500px; }
.out .emo { margin-right: 2px; }
.out .tail { left: auto; right: -15px; fill: #8247be; transform: scaleX(-1); }
.out time { margin: 20px 0 0 21px; color: #fff; }
.checks { margin: 27px 0 0 9px; }

.keys { position: relative; display: grid; gap: 10px 14px; width: 862px; margin: 10px 0 0 27px; }
.keys.short { width: 812px; }
.three { grid-template-columns: repeat(3, 1fr); }
.two { grid-template-columns: repeat(2, 1fr); }
.keys button { display: flex; justify-content: center; height: 116px; padding: 34px 20px 0; overflow: hidden; border-radius: 18px; background: rgba(81,99,111,.3); font-size: 39.800px; font-weight: 500; line-height: 49px; letter-spacing: .1px; white-space: nowrap; }
.keys .emo { width: 46px; height: 46px; margin: -5px 1px; }
.keys .bl { border-bottom-left-radius: 46px; }
.keys .br { border-bottom-right-radius: 46px; }
.keys .cut { justify-content: flex-start; }
.cut span { width: 100%; overflow: hidden; text-align: left; -webkit-mask-image: linear-gradient(90deg, #000 94%, transparent 101%); mask-image: linear-gradient(90deg, #000 94%, transparent 101%); }

/* message field */
.composer { display: flex; align-items: center; height: 130px; padding: 3px 32px 0 27px; background: #212c39; }
.menu { display: flex; flex-direction: column; justify-content: center; align-items: center; gap: 7px; width: 105px; height: 84px; border-radius: 42px; background: #5fa5de; }
.menu i { width: 43px; height: 6px; border-radius: 3px; background: #fff; }
.sticker { margin-left: 32px; }
.hint { margin: -3px auto 0 29px; font-size: 47px; line-height: 55px; color: #74818f; }
.clip { margin: 0 68px 0 71px; }

/* reply keyboard */
.keyboard { display: grid; grid-template-columns: 1fr 1fr; gap: 27px; height: 328px; padding: 40px 40px 0; align-content: start; background: #1c2631; }
.keyboard button { height: 111px; padding: 4px 0 0; border-radius: 11px; background: #293646; font-size: 42px; line-height: 49px; }
.wide { grid-column: 1 / -1; }

.sysnav { display: flex; height: 126px; padding: 44px 0 0 214px; background: #151c25; }
.home { margin-left: 257px; }
.goback { margin-left: 264px; }
```
